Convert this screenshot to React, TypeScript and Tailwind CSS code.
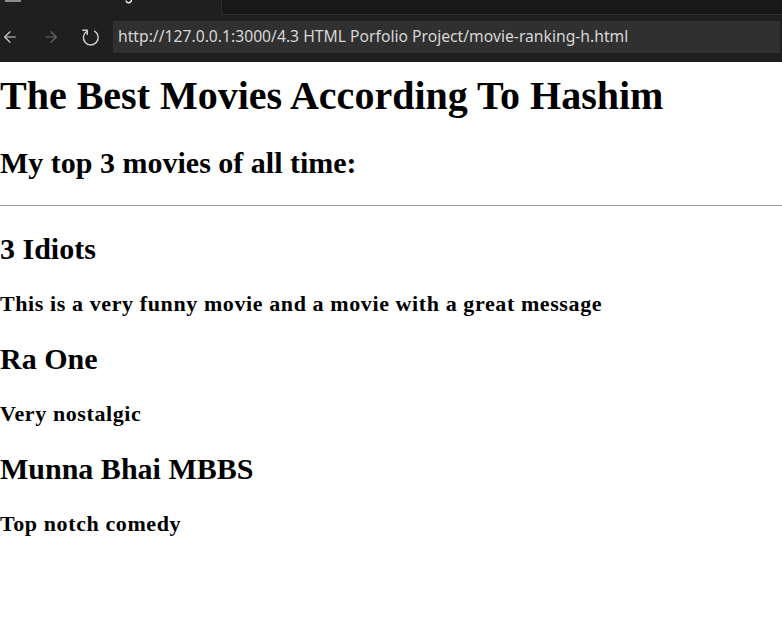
import { ArrowLeft, ArrowRight } from 'lucide-react';

const movies = [
  { title: '3 Idiots', note: 'This is a very funny movie and a movie with a great message' },
  { title: 'Ra One', note: 'Very nostalgic' },
  { title: 'Munna Bhai MBBS', note: 'Top notch comedy' },
];

function RefreshIcon() {
  return (
    <svg width="20" height="20" viewBox="0 0 20 20" fill="none" stroke="#cfcfcf" strokeWidth="1.4" strokeLinecap="round" strokeLinejoin="round">
      <path d="M13.6 4.2 A7.4 7.4 0 1 1 5.8 4.3" />
      <path d="M1.8 3.2 H6.3 V7.4" />
    </svg>
  );
}

function BrowserBar() {
  return (
    <div className="bg-[#1f1f1f]">
      <div className="flex h-[15px]">
        <div className="relative w-[221px]">
          <div className="absolute left-[5px] top-0 h-[2px] w-[16px] bg-[#8c8c8c]" />
          <svg className="absolute left-[124px] top-0" width="10" height="5" viewBox="0 0 10 5" fill="none">
            <path d="M2 0.5 C2.5 3.5 7 3.8 7.5 0" stroke="#f0f0f0" strokeWidth="1.4" />
          </svg>
        </div>
        <div className="flex-1 bg-[#181818] border-l border-b border-[#2e2e2e]" />
      </div>
      <div className="flex h-[47px] items-start pt-[6px]">
        <div className="flex h-[32px] w-[113px] items-center">
          <ArrowLeft className="ml-[1px]" size={18} strokeWidth={1.5} color="#d4d4d4" />
          <ArrowRight className="ml-[23px]" size={18} strokeWidth={1.5} color="#6b6b6b" />
          <div className="ml-[21px]">
            <RefreshIcon />
          </div>
        </div>
        <div className="flex h-[32px] flex-1 items-center bg-[#303030] pl-[5px] mr-[2px]">
          <span className="font-['Noto_Sans',sans-serif] text-[15.7px] text-[#d6d6d6] whitespace-nowrap">
            http://127.0.0.1:3000/4.3 HTML Porfolio Project/movie-ranking-h.html
          </span>
        </div>
      </div>
    </div>
  );
}

export default function App() {
  return (
    <div className="min-h-screen bg-white">
      <BrowserBar />
      <main className="font-['Liberation_Serif','Times_New_Roman',serif] text-black">
        <h1 className="mt-[11px] text-[40px] leading-[46px] font-bold">
          The Best Movies According To Hashim
        </h1>
        <h2 className="mt-[27px] text-[30px] leading-[34px] font-bold">
          My top 3 movies of all time:
        </h2>
        <hr className="mt-[25px] border-0 border-t border-[#a0a0a0]" />
        <div className="mt-[26px]">
          {movies.map((movie, i) => (
            <div key={movie.title} className={i > 0 ? 'mt-[25px]' : ''}>
              <h3 className="text-[30px] leading-[34px] font-bold">{movie.title}</h3>
              <p className="mt-[25px] text-[22px] leading-[26px] font-bold tracking-[0.6px]">
                {movie.note}
              </p>
            </div>
          ))}
        </div>
      </main>
    </div>
  );
}
